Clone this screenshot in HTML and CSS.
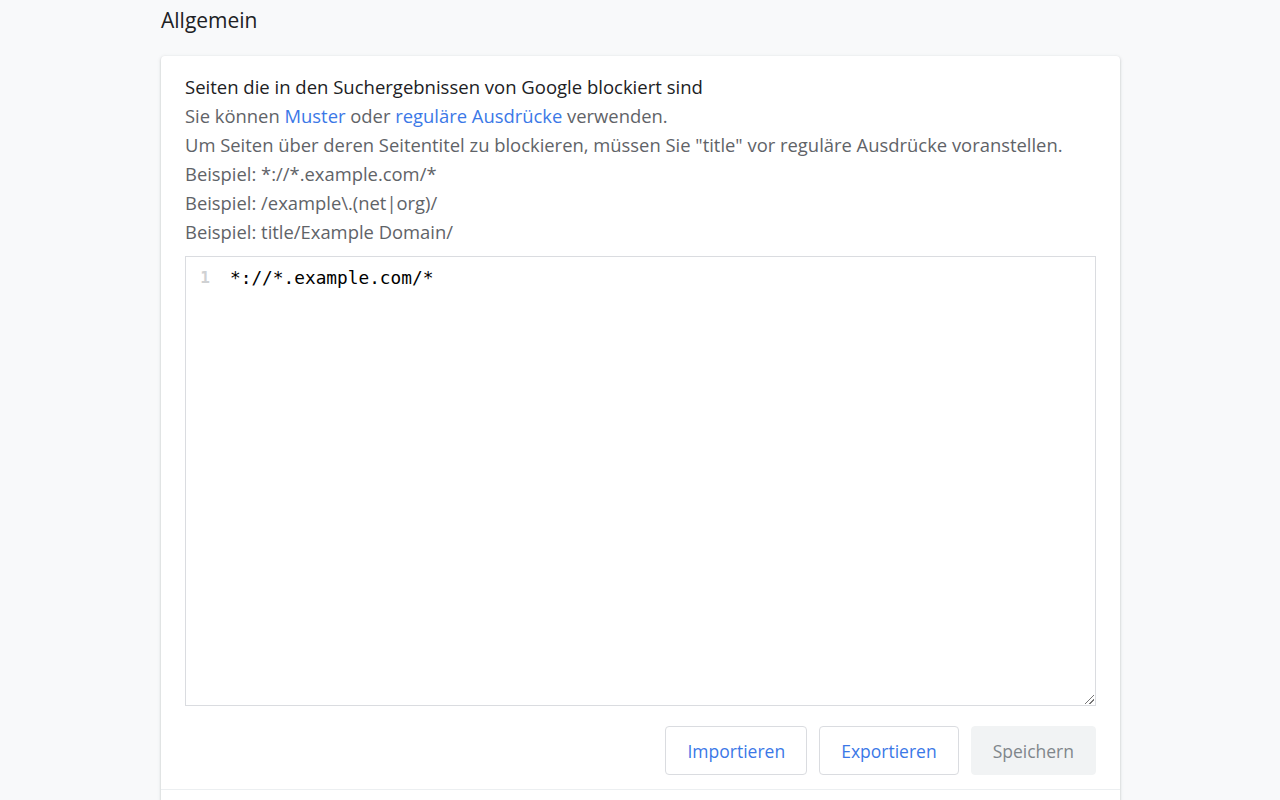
FILE: index.html
```html
<!DOCTYPE html>
<html lang="de">
<head>
<meta charset="utf-8">
<title>Allgemein</title>
<link rel="stylesheet" href="styles.css">
</head>
<body>
<main class="page">
  <h2 class="section-title">Allgemein</h2>
  <section class="card">
    <div class="card-body">
      <div class="label">Seiten die in den Suchergebnissen von Google blockiert sind</div>
      <div class="hint">Sie können <a href="#">Muster</a> oder <a href="#">reguläre Ausdrücke</a> verwenden.</div>
      <div class="hint">Um Seiten über deren Seitentitel zu blockieren, müssen Sie "title" vor reguläre Ausdrücke voranstellen.</div>
      <div class="hint">Beispiel: *://*.example.com/*</div>
      <div class="hint">Beispiel: /example\.(net|org)/</div>
      <div class="hint">Beispiel: title/Example Domain/</div>
      <div class="editor">
        <div class="gutter">1</div>
        <div class="code">*://*.example.com/*</div>
        <span class="grip"></span>
      </div>
      <div class="actions">
        <button class="btn">Importieren</button>
        <button class="btn">Exportieren</button>
        <button class="btn btn-disabled" disabled>Speichern</button>
      </div>
    </div>
    <div class="card-row"></div>
  </section>
</main>
</body>
</html>
```
FILE: styles.css
```css
html, body {
  margin: 0;
  padding: 0;
  background: #f8f9fa;
  font-family: "Open Sans", "Noto Sans", sans-serif;
  color: #202124;
}
.page {
  width: 959px;
  margin: 0 auto;
  padding: 5px 0 0 1px;
}
.section-title {
  margin: 0 0 20px 0;
  font-size: 21px;
  font-weight: 400;
  line-height: 31px;
  color: #202124;
}
.card {
  background: #fff;
  border-radius: 4px;
  box-shadow: 0 1px 2px rgba(60,64,67,0.25), 0 1px 4px rgba(60,64,67,0.12);
}
.card-body {
  padding: 16px 24px 14px 24px;
}
.label {
  font-size: 18.5px;
  line-height: 29px;
  color: #202124;
}
.hint {
  font-size: 18.4px;
  line-height: 29px;
  color: #5f6368;
}
.hint a {
  color: #3b78e7;
  text-decoration: none;
}
.editor {
  position: relative;
  margin-top: 10px;
  border: 1px solid #dadce0;
  display: flex;
  font-family: "DejaVu Sans Mono", "Liberation Mono", monospace;
  font-size: 17.8px;
  line-height: 22px;
  padding-top: 10px;
  box-sizing: border-box;
  height: 450px;
}
.gutter {
  width: 24px;
  text-align: right;
  color: #cfd1d3;
  font-weight: 700;
  font-size: 16px;
  padding-right: 20px;
}
.code {
  color: #000;
}
.grip {
  position: absolute;
  right: 1px;
  bottom: 1px;
  width: 9px;
  height: 9px;
  background:
    linear-gradient(135deg, transparent 45%, #777 45%, #777 55%, transparent 55%) no-repeat,
    linear-gradient(135deg, transparent 70%, #777 70%, #777 80%, transparent 80%) no-repeat;
}
.actions {
  display: flex;
  justify-content: flex-end;
  gap: 12px;
  margin-top: 20px;
}
.btn {
  height: 49px;
  padding: 0 21px;
  border: 1px solid #dadce0;
  border-radius: 4px;
  background: #fff;
  color: #3b78e7;
  font-family: "Open Sans", "Noto Sans", sans-serif;
  font-size: 17.5px;
}
.btn-disabled {
  background: #f1f3f4;
  border-color: #f1f3f4;
  color: #80868b;
}
.card-row {
  border-top: 1px solid #eceff1;
  height: 40px;
}
```
